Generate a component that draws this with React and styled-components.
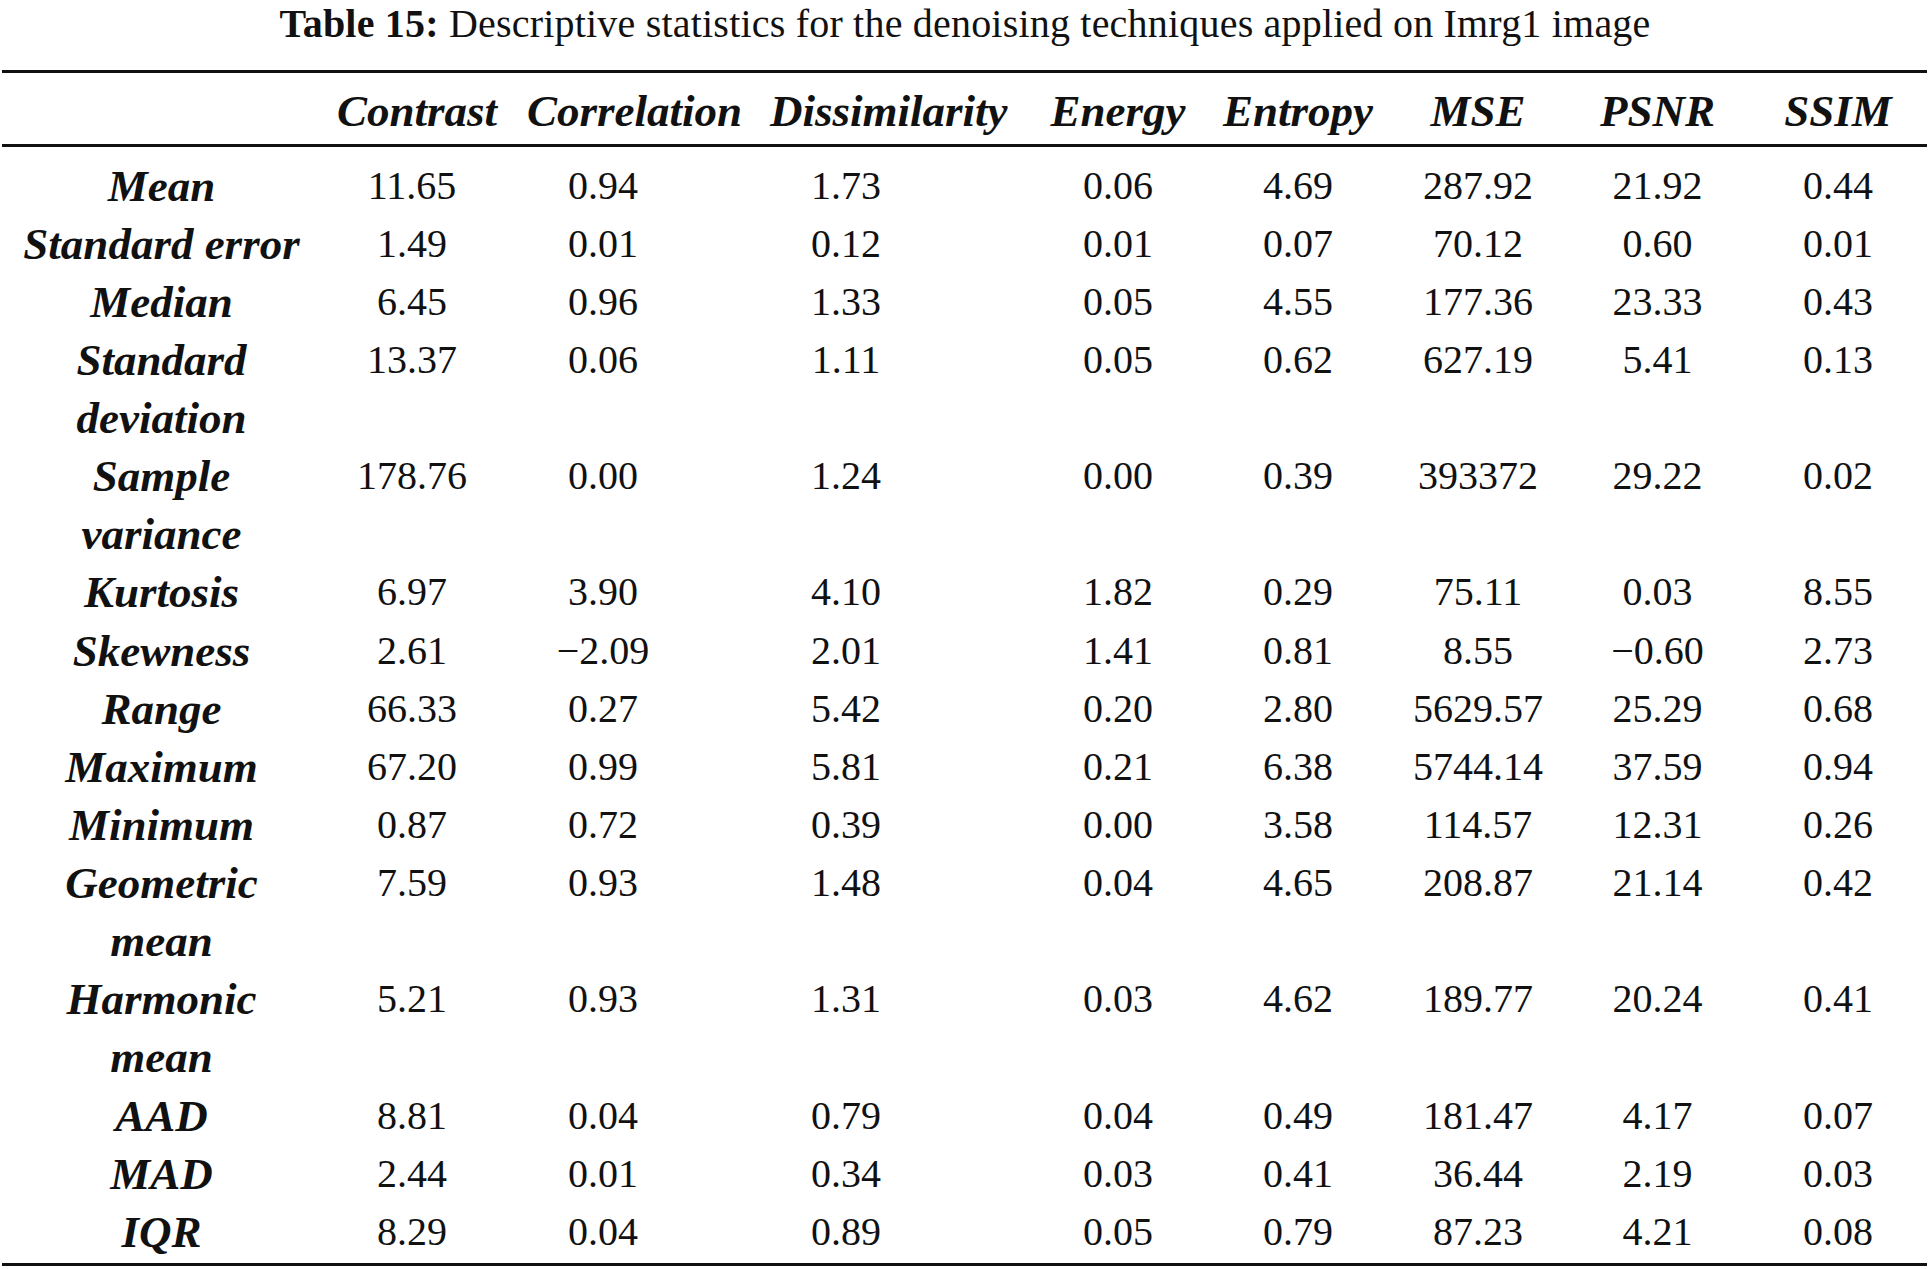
import styled, { createGlobalStyle } from "styled-components";

// ===== Global =====
const GlobalStyle = createGlobalStyle`
    html, body {
        margin: 0;
        padding: 0;
        background: #ffffff;
    }
    body {
        font-family: "Liberation Serif", "Times New Roman", serif;
        color: #111111;
    }
`;

// each column: track width, left padding (content box start), right padding
const COLUMNS = [
    { w: 319, pl: 0 },
    { w: 166, pl: 16 },
    { w: 192, pl: 40 },
    { w: 243, pl: 91 },
    { w: 276, pl: 116 },
    { w: 179, pl: 21 },
    { w: 179, pl: 23 },
    { w: 179, pl: 24 },
    { w: 192, pl: 25, pr: 11 },
];

const HEADERS = [
    "",
    "Contrast",
    "Correlation",
    "Dissimilarity",
    "Energy",
    "Entropy",
    "MSE",
    "PSNR",
    "SSIM",
];

const ROWS = [
    ["Mean", "11.65", "0.94", "1.73", "0.06", "4.69", "287.92", "21.92", "0.44"],
    ["Standard error", "1.49", "0.01", "0.12", "0.01", "0.07", "70.12", "0.60", "0.01"],
    ["Median", "6.45", "0.96", "1.33", "0.05", "4.55", "177.36", "23.33", "0.43"],
    [["Standard", "deviation"], "13.37", "0.06", "1.11", "0.05", "0.62", "627.19", "5.41", "0.13"],
    [["Sample", "variance"], "178.76", "0.00", "1.24", "0.00", "0.39", "393372", "29.22", "0.02"],
    ["Kurtosis", "6.97", "3.90", "4.10", "1.82", "0.29", "75.11", "0.03", "8.55"],
    ["Skewness", "2.61", "\u22122.09", "2.01", "1.41", "0.81", "8.55", "\u22120.60", "2.73"],
    ["Range", "66.33", "0.27", "5.42", "0.20", "2.80", "5629.57", "25.29", "0.68"],
    ["Maximum", "67.20", "0.99", "5.81", "0.21", "6.38", "5744.14", "37.59", "0.94"],
    ["Minimum", "0.87", "0.72", "0.39", "0.00", "3.58", "114.57", "12.31", "0.26"],
    [["Geometric", "mean"], "7.59", "0.93", "1.48", "0.04", "4.65", "208.87", "21.14", "0.42"],
    [["Harmonic", "mean"], "5.21", "0.93", "1.31", "0.03", "4.62", "189.77", "20.24", "0.41"],
    ["AAD", "8.81", "0.04", "0.79", "0.04", "0.49", "181.47", "4.17", "0.07"],
    ["MAD", "2.44", "0.01", "0.34", "0.03", "0.41", "36.44", "2.19", "0.03"],
    ["IQR", "8.29", "0.04", "0.89", "0.05", "0.79", "87.23", "4.21", "0.08"],
];

// ===== Styled Components =====
const Page = styled.div`
    width: 1930px;
    padding-top: 1.5px;
`;

const Caption = styled.div`
    font-size: 40px;
    line-height: 44px;
    letter-spacing: 0.2px;
    text-align: center;
    white-space: nowrap;
    margin-bottom: 24.5px;

    b {
        font-weight: bold;
    }
`;

const Table = styled.div`
    width: 1925px;
    margin-left: 2px;
`;

const Grid = styled.div`
    display: grid;
    grid-template-columns: ${COLUMNS.map((c) => `${c.w}px`).join(" ")};
    align-items: start;
`;

const Head = styled(Grid)`
    border-top: 3px solid #111111;
    border-bottom: 3px solid #111111;
    padding: 9px 0 4px;
`;

const Body = styled(Grid)`
    border-bottom: 3px solid #111111;
    padding: 9.5px 0 2px;
`;

const Cell = styled.div`
    box-sizing: border-box;
    min-width: 0;
    padding-left: ${(p) => p.$pl}px;
    padding-right: ${(p) => p.$pr || 0}px;
    text-align: center;
    white-space: nowrap;
    line-height: 58.13px;
    font-size: ${(p) => (p.$label ? "45px" : "40px")};
    font-style: ${(p) => (p.$label ? "italic" : "normal")};
    font-weight: ${(p) => (p.$label ? "bold" : "normal")};
`;

const HeadCell = styled(Cell)`
    line-height: 58px;
`;

function Label({ text }) {
    if (Array.isArray(text)) {
        return (
            <>
                {text[0]}
                <br />
                {text[1]}
            </>
        );
    }
    return text;
}

export default function App() {
    return (
        <Page>
            <GlobalStyle />
            <Caption>
                <b>Table 15:</b> Descriptive statistics for the denoising
                techniques applied on Imrg1 image
            </Caption>
            <Table>
                <Head>
                    {HEADERS.map((h, i) => (
                        <HeadCell
                            key={i}
                            $label
                            $pl={COLUMNS[i].pl}
                            $pr={COLUMNS[i].pr}
                        >
                            {h}
                        </HeadCell>
                    ))}
                </Head>
                <Body>
                    {ROWS.map((row, r) =>
                        row.map((v, i) => (
                            <Cell
                                key={`${r}-${i}`}
                                $label={i === 0}
                                $pl={COLUMNS[i].pl}
                                $pr={COLUMNS[i].pr}
                            >
                                <Label text={v} />
                            </Cell>
                        ))
                    )}
                </Body>
            </Table>
        </Page>
    );
}
